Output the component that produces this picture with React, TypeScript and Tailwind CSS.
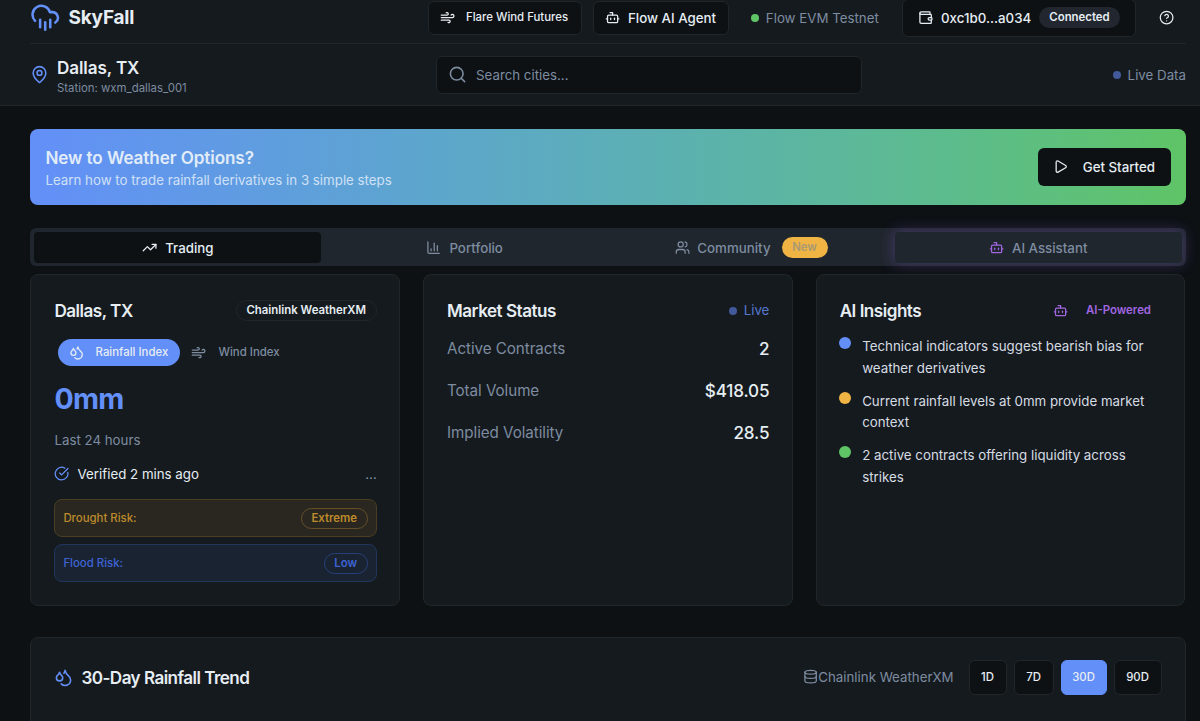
import {
  Bot, ChartColumn, CircleCheckBig, CircleQuestionMark, CloudRain, Database, Droplets,
  MapPin, Play, Search, TrendingUp, Users, Wallet, Wind,
} from 'lucide-react';
import type { ReactNode } from 'react';

const insights = [
  { color: 'bg-[#638ff8]', text: 'Technical indicators suggest bearish bias for weather derivatives' },
  { color: 'bg-[#f0b445]', text: 'Current rainfall levels at 0mm provide market context' },
  { color: 'bg-[#5fc466]', text: '2 active contracts offering liquidity across strikes' },
];

const stats = [
  { label: 'Active Contracts', value: '2' },
  { label: 'Total Volume', value: '$418.05' },
  { label: 'Implied Volatility', value: '28.5' },
];

const ranges = [
  { label: '1D', width: 'w-[38px]' },
  { label: '7D', width: 'w-[40px]' },
  { label: '30D', width: 'w-[46px]' },
  { label: '90D', width: 'w-[48px]' },
];

function Card({ children }: { children: ReactNode }) {
  return (
    <section className="flex h-[332px] flex-col rounded-[8px] border border-[#20262a] bg-[#151a1e] pt-[22px] pr-[22.5px] pl-[23px]">
      {children}
    </section>
  );
}

function CardTitle({ children }: { children: ReactNode }) {
  return <h3 className="text-[17.1px] font-semibold tracking-[-0.5px] text-[#e6edf3]">{children}</h3>;
}

function Header() {
  return (
    <header className="h-[106px] border-b border-[#20262a] bg-[#151a1e] pr-[14px] pl-[30px]">
      <div className="flex h-[44px] items-center border-b border-[#20262a] pb-[8px]">
        <CloudRain size={30.4} className="text-[#638ff8]" />
        <span className="ml-[8px] pt-[2px] text-[19px] font-bold tracking-[-0.2px] text-[#e6edf3]">SkyFall</span>
        <div className="ml-auto flex shrink-0 items-center">
          <button className="flex h-[34px] w-[154px] items-center rounded-[6px] border border-[#20262a] bg-[#0d1114] pl-[11px] text-[11.4px] font-medium text-[#e6edf3]">
            <Wind size={15.2} />
            <span className="ml-[11px] pt-[1px]">Flare Wind Futures</span>
          </button>
          <button className="ml-[11px] flex h-[34px] w-[136px] items-center rounded-[6px] border border-[#20262a] bg-[#0d1114] pl-[11px] text-[13.3px] font-medium text-[#e6edf3]">
            <Bot size={15.2} />
            <span className="ml-[8px] pt-[2px]">Flow AI Agent</span>
          </button>
          <span className="ml-[22px] size-[8px] rounded-full bg-[#5fc466]" />
          <span className="ml-[7px] w-[136px] pt-[2px] text-[13.3px] text-[#7d8ca0]">Flow EVM Testnet</span>
          <div className="flex h-[38px] w-[234px] items-center rounded-[6px] border border-[#20262a] bg-[#0d1114] pl-[15px] text-[13.3px] font-medium text-[#e6edf3]">
            <Wallet size={15.2} />
            <span className="ml-[8px] w-[98px] pt-[2px]">0xc1b0...a034</span>
            <span className="flex h-[21px] w-[81px] items-center justify-center rounded-full bg-[#21262f] pt-[1px] text-[11.4px] font-semibold">Connected</span>
          </div>
          <CircleQuestionMark size={15.2} className="mr-[12px] ml-[23px] text-[#e6edf3]" />
        </div>
      </div>
      <div className="flex h-[61px] items-center">
        <MapPin size={19} className="text-[#638ff8]" />
        <div className="ml-[8px] w-[379px] pt-[3px]">
          <div className="text-[17.1px] leading-[24px] font-semibold tracking-[-0.1px] text-[#e6edf3]">Dallas, TX</div>
          <div className="text-[11.4px] leading-[17px] text-[#7d8ca0]">Station: wxm_dallas_001</div>
        </div>
        <div className="flex h-[38px] w-[426px] items-center rounded-[6px] border border-[#20262a] bg-[#0d1114] pl-[11px] text-[#7d8ca0]">
          <Search size={19} />
          <span className="ml-[9px] pt-[2px] text-[13.3px]">Search cities...</span>
        </div>
        <div className="ml-auto flex items-center gap-[7px] text-[13.3px] text-[#7d8ca0]">
          <span className="size-[8px] rounded-full bg-[#425a9b]" />
          <span className="pt-[2px]">Live Data</span>
        </div>
      </div>
    </header>
  );
}

function Tabs() {
  return (
    <nav className="mt-[23px] flex h-[38px] items-center rounded-[6px] bg-[#20262d] px-[4px] text-[13.3px] font-medium text-[#7d8ca0]">
      <div className="flex h-[31px] flex-1 items-center justify-center gap-[8px] rounded-[4px] bg-[#0d1114] pt-[1px] text-[#e6edf3]">
        <TrendingUp size={15.2} />
        <span className="pt-[2px]">Trading</span>
      </div>
      <div className="flex h-[31px] flex-1 items-center justify-center gap-[8px] pt-[1px]">
        <ChartColumn size={15.2} />
        <span className="pt-[2px]">Portfolio</span>
      </div>
      <div className="flex h-[31px] flex-1 items-center justify-center gap-[7px] pt-[1px]">
        <Users size={15.2} />
        <span className="pt-[2px]">Community</span>
        <span className="ml-[4px] flex h-[21px] w-[46px] items-center justify-center rounded-full bg-[#f0b445] pt-[1px] text-[11.4px] font-semibold text-[#a99a72]">New</span>
      </div>
      <div className="flex h-[31px] flex-1 items-center justify-center gap-[8px] rounded-[4px] pt-[1px] shadow-[0_0_14px_2px_rgba(148,110,240,0.27)]">
        <Bot size={15.2} className="text-[#a066e0]" />
        <span className="pt-[2px]">AI Assistant</span>
      </div>
    </nav>
  );
}

export default function App() {
  return (
    <div className="h-[721px] w-[1200px] overflow-hidden bg-[#0d1114] font-['Inter',sans-serif]">
      <Header />
      <main className="pt-[23px] pr-[14.5px] pl-[30.4px]">
        <section className="flex h-[76px] items-center justify-between rounded-[8px] bg-linear-to-r from-[#638ff8] to-[#5fc466] px-[15px]">
          <div className="pt-[2px]">
            <h2 className="text-[17.1px] leading-[24px] font-semibold tracking-[-0.08px] text-[#e1ecf8]">New to Weather Options?</h2>
            <p className="text-[13.3px] leading-[21px] text-[#cfe0f6]">Learn how to trade rainfall derivatives in 3 simple steps</p>
          </div>
          <button className="flex h-[38px] w-[133px] items-center rounded-[6px] bg-[#0d1114] pl-[15px] text-[13.3px] font-medium text-[#e6edf3]">
            <Play size={15.2} />
            <span className="ml-[15px] pt-[2px]">Get Started</span>
          </button>
        </section>
        <Tabs />
        <div className="mt-[8px] grid grid-cols-3 gap-[22.8px]">
          <Card>
            <div className="flex h-[27px] items-center justify-between">
              <CardTitle>Dallas, TX</CardTitle>
              <span className="flex h-[21px] w-[141px] items-center justify-center rounded-full border border-[#20262a] pt-[1px] text-[11.4px] font-semibold text-[#e6edf3]">Chainlink WeatherXM</span>
            </div>
            <div className="mt-[15px] flex h-[27px] items-center text-[11.4px] font-medium text-[#7d8ca0]">
              <div className="ml-[4px] flex h-[27px] w-[122px] items-center rounded-full bg-[#638ff8] pl-[11px] text-[#e6edf3]">
                <Droplets size={15.2} />
                <span className="ml-[11px]">Rainfall Index</span>
              </div>
              <Wind size={15.2} className="ml-[11px]" />
              <span className="ml-[12px]">Wind Index</span>
            </div>
            <div className="mt-[16px] text-[28.5px] leading-[34px] font-bold tracking-[-0.7px] text-[#638ff8]">0mm</div>
            <div className="mt-[14px] text-[13.3px] leading-[20px] text-[#7d8ca0]">Last 24 hours</div>
            <div className="mt-[14px] flex h-[20px] items-center text-[13.3px] text-[#e6edf3]">
              <CircleCheckBig size={15.2} className="text-[#638ff8]" />
              <span className="ml-[8px] pt-[2px]">Verified 2 mins ago</span>
              <span className="ml-auto pt-[2px] text-[#7d8ca0]">...</span>
            </div>
            <div className="mt-[15px] flex h-[38px] items-center justify-between rounded-[8px] border border-[#4a3e22] bg-[#2a2720] px-[8px] text-[11.4px] font-medium text-[#bd8b2c]">
              <span className="pt-[1px]">Drought Risk:</span>
              <span className="flex h-[21px] w-[67px] items-center justify-center rounded-full border border-[#65502a] pt-[1px] font-semibold">Extreme</span>
            </div>
            <div className="mt-[7px] flex h-[38px] items-center justify-between rounded-[8px] border border-[#22355c] bg-[#1a2332] px-[8px] text-[11.4px] font-medium text-[#3e63d4]">
              <span className="pt-[2px]">Flood Risk:</span>
              <span className="flex h-[21px] w-[44px] items-center justify-center rounded-full border border-[#28407a] pt-[1px] font-semibold">Low</span>
            </div>
          </Card>
          <Card>
            <div className="flex h-[27px] items-center justify-between">
              <CardTitle>Market Status</CardTitle>
              <span className="flex items-center gap-[7px] pt-[1px] text-[13.3px] text-[#5577ce]">
                <span className="size-[8px] rounded-full bg-[#425a9b]" />
                Live
              </span>
            </div>
            <div className="mt-[11px] flex flex-col gap-[15px]">
              {stats.map((s) => (
                <div key={s.label} className="flex h-[27px] items-center justify-between">
                  <span className="pt-[1px] text-[15.2px] tracking-[-0.06px] text-[#7d8ca0]">{s.label}</span>
                  <span className="text-[17.1px] font-medium tracking-[-0.15px] text-[#e6edf3]">{s.value}</span>
                </div>
              ))}
            </div>
          </Card>
          <Card>
            <div className="flex h-[27px] items-center">
              <CardTitle>AI Insights</CardTitle>
              <span className="mr-[11px] ml-auto flex items-center gap-[18px] pt-[1px] text-[11.4px] font-semibold text-[#a066e0]">
                <Bot size={15.2} />
                AI-Powered
              </span>
            </div>
            <ul className="mt-[11px] flex flex-col gap-[11px]">
              {insights.map((i) => (
                <li key={i.text} className="flex text-[13.3px] leading-[21.8px] text-[#d5dce3]">
                  <span className={`mt-[2px] mr-[11px] -ml-[0.5px] size-[12px] shrink-0 rounded-full ${i.color}`} />
                  <span className="-mb-[1px] pt-[1px]">{i.text}</span>
                </li>
              ))}
            </ul>
          </Card>
        </div>
        <section className="mt-[31px] flex h-[120px] rounded-[8px] border border-[#20262a] bg-[#151a1e] px-[23px] pt-[21px]">
          <div className="flex h-[36px] w-full items-center">
            <Droplets size={19} className="text-[#638ff8]" />
            <h3 className="ml-[8px] pt-[2px] text-[17.1px] font-semibold tracking-[-0.55px] text-[#e6edf3]">30-Day Rainfall Trend</h3>
            <div className="ml-auto flex items-center text-[13.3px] text-[#7d8ca0]">
              <Database size={15.2} />
              <span className="pt-[1px]">Chainlink WeatherXM</span>
            </div>
            <div className="ml-[15px] flex gap-[7px]">
              {ranges.map((r) => (
                <button
                  key={r.label}
                  className={`h-[35px] rounded-[6px] border pt-[1px] text-[11.4px] font-medium text-[#e6edf3] ${r.width} ${r.label === '30D' ? 'border-[#638ff8] bg-[#638ff8]' : 'border-[#20262a] bg-[#0d1114]'}`}
                >
                  {r.label}
                </button>
              ))}
            </div>
          </div>
        </section>
      </main>
    </div>
  );
}
